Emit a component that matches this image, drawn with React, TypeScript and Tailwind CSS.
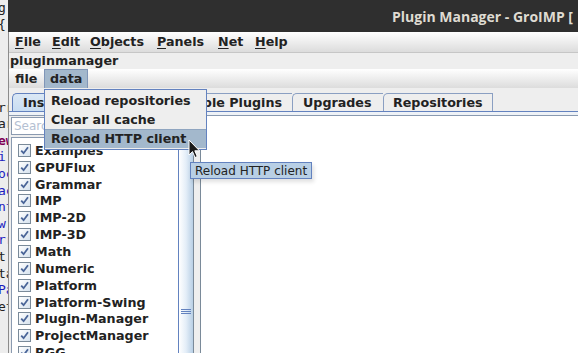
import React from "react";

const ui = { fontFamily: '"DejaVu Sans", "Liberation Sans", sans-serif' };

const stripLines: { t: string; c: string; b?: boolean }[] = [
  { t: "g", c: "#222" },
  { t: "{", c: "#222" },
  { t: "", c: "#222" },
  { t: "", c: "#222" },
  { t: "", c: "#222" },
  { t: "", c: "#222" },
  { t: "rr", c: "#222" },
  { t: "ar", c: "#222" },
  { t: "ew", c: "#7f0055", b: true },
  { t: "i", c: "#1c1cc0" },
  { t: "oc", c: "#1c1cc0" },
  { t: "ac", c: "#1c1cc0" },
  { t: "nt", c: "#1c1cc0" },
  { t: "w", c: "#1c1cc0" },
  { t: "rr", c: "#1c1cc0" },
  { t: "t", c: "#222" },
  { t: "ta", c: "#222" },
  { t: "Pa", c: "#1c1cc0" },
  { t: "et", c: "#222" },
];

const plugins = [
  "Examples",
  "GPUFlux",
  "Grammar",
  "IMP",
  "IMP-2D",
  "IMP-3D",
  "Math",
  "Numeric",
  "Platform",
  "Platform-Swing",
  "Plugin-Manager",
  "ProjectManager",
  "RGG",
];

function CheckBox() {
  return (
    <div className="w-[13px] h-[13px] shrink-0 border border-[#7a8a99] bg-gradient-to-br from-white to-[#d6e2ee]">
      <svg width="11" height="11" viewBox="0 0 11 11">
        <path d="M2.2 5.6 L4.6 8.2 L9 2.2" fill="none" stroke="#4a6598" strokeWidth="1.8" />
      </svg>
    </div>
  );
}

export default function App() {
  return (
    <div className="relative w-[578px] h-[353px] overflow-hidden flex bg-[#ededed] text-[#222]" style={ui}>
      {/* window behind */}
      <div className="w-[8px] shrink-0 overflow-hidden" style={{ fontFamily: '"DejaVu Sans Mono", monospace' }}>
        {stripLines.map((l, i) => (
          <div
            key={i}
            className="h-[16.6px] leading-[16.6px] text-[13px] whitespace-nowrap -ml-[2px]"
            style={{ color: l.c, fontWeight: l.b ? 700 : 400 }}
          >
            {l.t}
          </div>
        ))}
      </div>

      {/* Plugin Manager window */}
      <div className="flex-1 min-w-0 flex flex-col">
        <div
          className="h-[32px] shrink-0 bg-[#2f2f2f] pl-[384px] flex items-center text-[14px] font-bold text-[#dfdbd2] whitespace-nowrap"
          style={{ fontFamily: '"Open Sans", "DejaVu Sans", sans-serif' }}
        >
          Plugin Manager - GroIMP [
        </div>

        <div className="flex-1 flex flex-col border-l border-[#8c8c8c] bg-[#eeeeee]">
          {/* main menubar */}
          <div className="h-[21px] shrink-0 flex items-center pl-[6px] border-b border-[#c6c6c6] bg-gradient-to-b from-white to-[#dcdcdc] text-[12.7px] font-bold">
            <span className="w-[37px]"><u className="underline-offset-2">F</u>ile</span>
            <span className="w-[38px]"><u className="underline-offset-2">E</u>dit</span>
            <span className="w-[67px]"><u className="underline-offset-2">O</u>bjects</span>
            <span className="w-[61px]"><u className="underline-offset-2">P</u>anels</span>
            <span className="w-[37px]"><u className="underline-offset-2">N</u>et</span>
            <span><u className="underline-offset-2">H</u>elp</span>
          </div>

          {/* internal frame title */}
          <div className="h-[16px] shrink-0 pl-[1px] text-[12.7px] font-bold leading-[16px]">pluginmanager</div>

          {/* internal menubar */}
          <div className="h-[19px] shrink-0 flex items-stretch bg-gradient-to-b from-white to-[#dcdcdc] text-[12.7px] font-bold">
            <div className="w-[35px] pl-[6px] flex items-center">file</div>
            <div className="w-[44px] pl-[5px] flex items-center bg-[#a3b8cc] border-x border-t border-[#8096b8]">data</div>
          </div>

          {/* tabs */}
          <div className="h-[23px] shrink-0 flex items-end pl-[3px] text-[12.7px] font-bold">
            <div className="h-[18px] w-[140px] flex items-center pl-[10px] rounded-tl-[5px] border-l border-t border-[#6382bf] bg-gradient-to-b from-[#dbe8f5] to-[#c8ddf2]">
              Installed Plugins
            </div>
            <div className="h-[18px] w-[140px] flex items-center justify-end pr-[10px] rounded-tl-[5px] border-l border-t border-[#8a9fc2]">
              Available Plugins
            </div>
            <div className="h-[18px] w-[91px] flex items-center pl-[10px] rounded-tl-[5px] border-l border-t border-[#8a9fc2]">
              Upgrades
            </div>
            <div className="h-[18px] w-[110px] flex items-center pl-[9px] rounded-tl-[5px] border-x border-t border-[#8a9fc2]">
              Repositories
            </div>
          </div>

          {/* tab content */}
          <div className="flex-1 flex flex-col border-t border-[#6382bf] pt-[3px] bg-[#eef2f7]">
            <div className="flex-1 flex border-t border-[#8a9ab0] bg-[#eeeeee] pl-[2px]">
              {/* left: search + list */}
              <div className="w-[183px] shrink-0 flex flex-col">
                <div className="h-[18px] mt-[1px] shrink-0 bg-white border border-[#8a9ab0] pl-[2px] flex items-center text-[12px] text-[#b4c0d2]">
                  Search
                </div>
                <div className="flex-1 flex mt-[2px] border-l border-t border-[#8a9ab0] bg-white">
                  <div className="flex-1 pt-[4px]">
                    {plugins.map((p) => (
                      <div key={p} className="h-[16.85px] flex items-center pl-[6px] gap-[4px] text-[12.7px] font-bold whitespace-nowrap">
                        <CheckBox />
                        <span>{p}</span>
                      </div>
                    ))}
                  </div>
                  {/* scrollbar */}
                  <div className="w-[16px] shrink-0 flex flex-col bg-[#eeeeee]">
                    <div className="h-[12px] shrink-0" />
                    <div className="flex-1 flex flex-col items-center border-l border-[#6382bf] border-r border-r-[#7a8a99] bg-gradient-to-r from-white via-[#e4eef8] to-[#b8cfe5]">
                      <div className="flex flex-col gap-[1px] mt-[159px]">
                        <div className="w-[10px] h-[1px] bg-[#6382bf]" />
                        <div className="w-[10px] h-[1px] bg-[#6382bf]" />
                        <div className="w-[10px] h-[1px] bg-[#6382bf]" />
                      </div>
                    </div>
                  </div>
                </div>
              </div>
              {/* divider */}
              <div className="w-[6px] shrink-0 bg-[#eeeeee]" />
              {/* right: details */}
              <div className="flex-1 bg-white border-l border-[#7a8a99]" />
            </div>
          </div>
        </div>
      </div>

      {/* dropdown menu */}
      <div className="absolute left-[44px] top-[89px] w-[163px] border border-[#6382bf] bg-[#eeeeee] py-[1px] text-[12.7px] font-bold">
        <div className="h-[19px] flex items-center pl-[6px]">Reload repositories</div>
        <div className="h-[19px] flex items-center pl-[6px]">Clear all cache</div>
        <div className="h-[19px] flex items-center pl-[6px] bg-[#a3b8cc] border-t border-[#8fa5c0]">Reload HTTP client</div>
      </div>

      {/* tooltip */}
      <div className="absolute left-[190px] top-[162px] h-[17px] px-[4px] flex items-center border border-[#6382bf] bg-[#b8cfe5] text-[12px] whitespace-nowrap shadow-[2px_3px_4px_rgba(0,0,0,0.12)]">
        Reload HTTP client
      </div>

      {/* mouse cursor */}
      <svg className="absolute left-[188px] top-[139px]" width="13" height="20" viewBox="0 0 13 20">
        <path d="M1 1 L1 16 L4.5 12.6 L7 18.5 L9.3 17.5 L6.8 11.8 L11.5 11.8 Z" fill="#1a1a1a" stroke="#ffffff" strokeWidth="1" />
      </svg>
    </div>
  );
}
